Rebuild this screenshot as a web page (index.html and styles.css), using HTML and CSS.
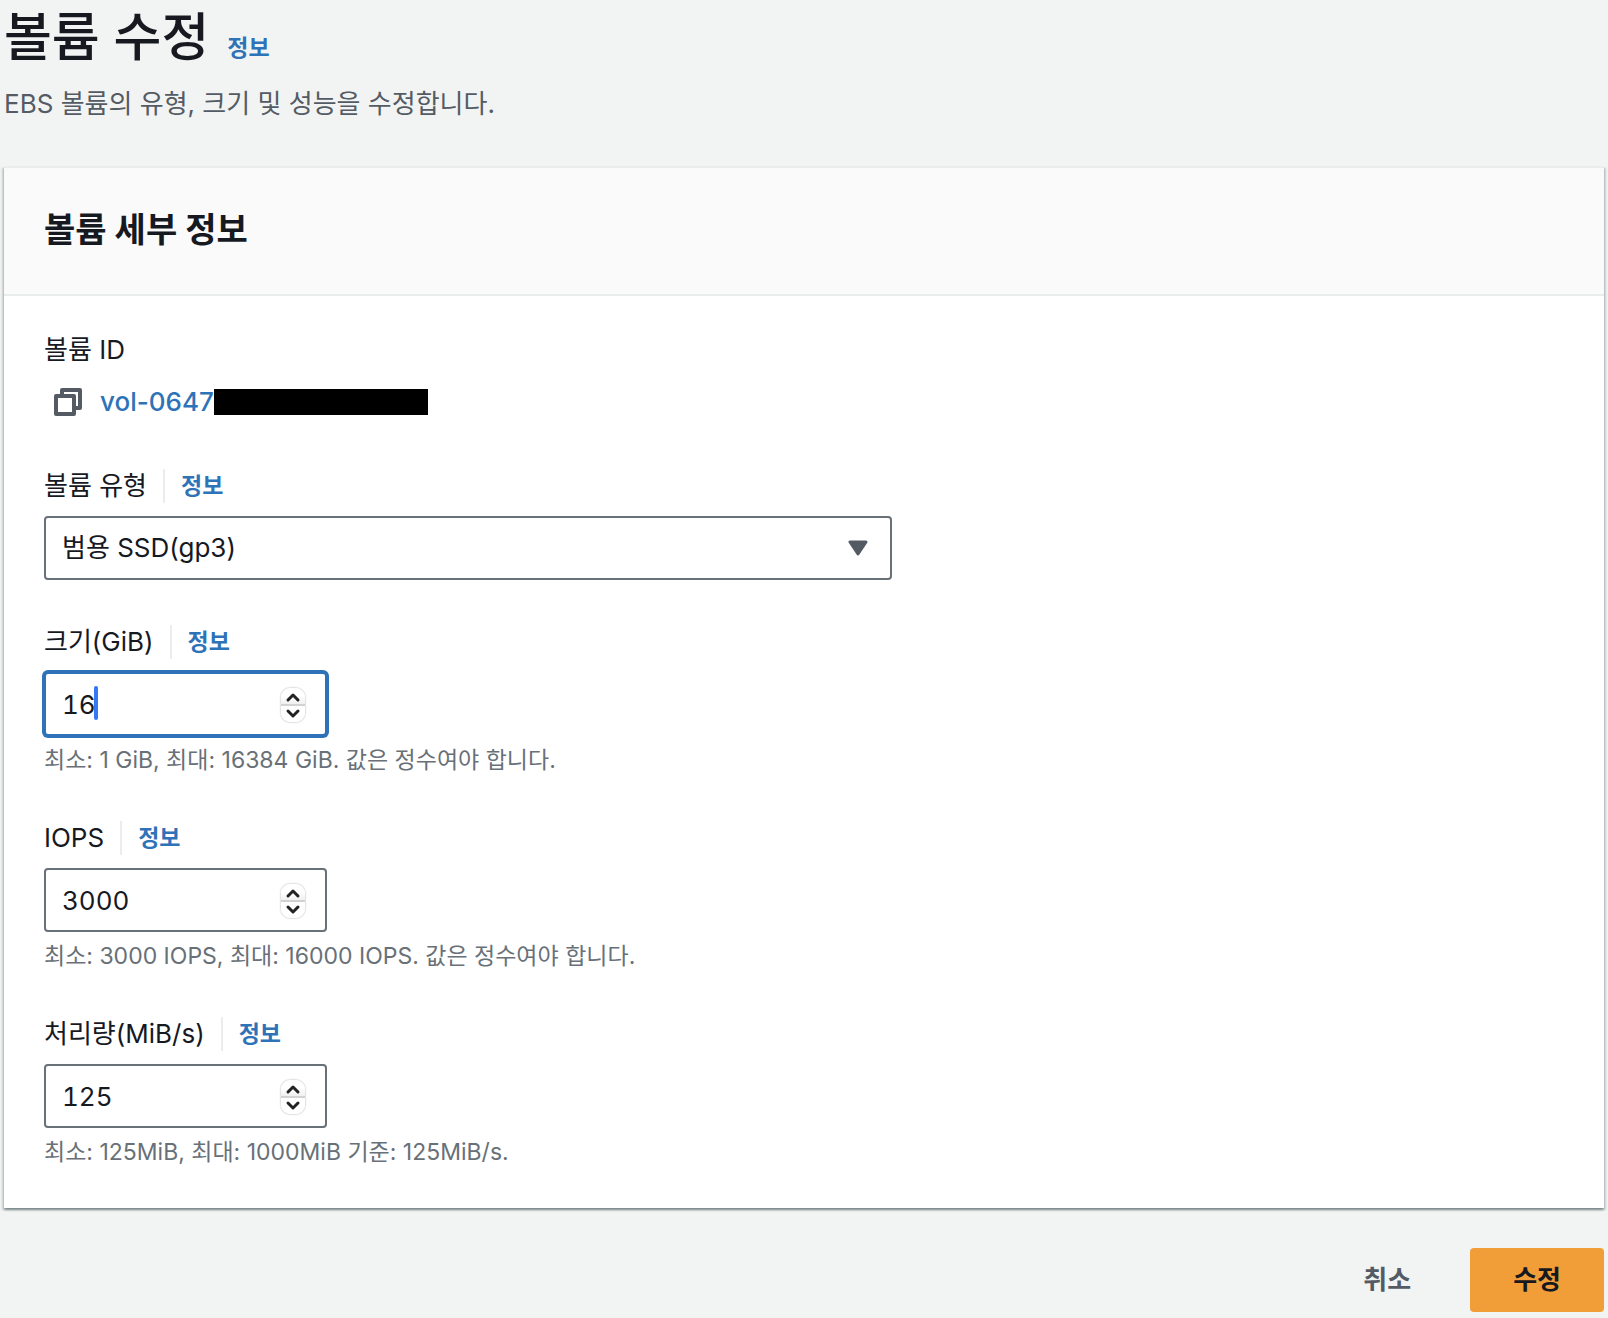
FILE: index.html
```html
<!DOCTYPE html>
<html lang="ko">
<head>
    <meta charset="UTF-8">
    <meta name="viewport" content="width=device-width, initial-scale=1.0">
    <title>볼륨 수정</title>
    <link rel="stylesheet" href="styles.css">
</head>
<body>

    <header class="page-header">
        <div class="title-row">
            <h1>볼륨 수정</h1>
            <a class="info" href="#">정보</a>
        </div>
        <p class="description">EBS 볼륨의 유형, 크기 및 성능을 수정합니다.</p>
    </header>

    <form>
        <section class="card">
            <div class="card-header">
                <h2>볼륨 세부 정보</h2>
            </div>

            <div class="card-body">
                <div class="field">
                    <div class="label-row">볼륨 ID</div>
                    <div class="volume-id">
                        <button class="copy-button" type="button" aria-label="복사">
                            <svg width="28" height="28" viewBox="0 0 28 28" fill="none" stroke="#545b64" stroke-width="4" stroke-linejoin="round">
                                <path d="M8 6V2H26V20H22"/>
                                <path d="M2 8H20V26H2Z"/>
                            </svg>
                        </button>
                        <a href="#">vol-0647</a>
                        <span class="redacted"></span>
                    </div>
                </div>

                <div class="field">
                    <div class="label-row">
                        <label for="volume-type">볼륨 유형</label>
                        <a class="info" href="#">정보</a>
                    </div>
                    <div class="select-box">
                        <select id="volume-type">
                            <option>범용 SSD(gp3)</option>
                        </select>
                        <svg class="arrow" width="20" height="16" viewBox="0 0 20 16">
                            <path d="M2 2H18L10 14Z" fill="#545b64" stroke="#545b64" stroke-width="3" stroke-linejoin="round"/>
                        </svg>
                    </div>
                </div>

                <div class="field">
                    <div class="label-row">
                        <label for="size">크기(GiB)</label>
                        <a class="info" href="#">정보</a>
                    </div>
                    <div class="number-box active">
                        <input type="number" id="size" value="16" min="1" max="16384">
                        <span class="caret"></span>
                        <span class="stepper">
                            <svg width="24" height="34" viewBox="0 0 24 34" fill="none" stroke="#222" stroke-width="3" stroke-linecap="round" stroke-linejoin="round">
                                <path d="M7 12L12 7L17 12"/>
                                <path d="M7 23L12 28L17 23"/>
                            </svg>
                        </span>
                    </div>
                    <p class="hint">최소: 1 GiB, 최대: 16384 GiB. 값은 정수여야 합니다.</p>
                </div>

                <div class="field">
                    <div class="label-row">
                        <label for="iops">IOPS</label>
                        <a class="info" href="#">정보</a>
                    </div>
                    <div class="number-box">
                        <input type="number" id="iops" value="3000" min="3000" max="16000">
                        <span class="stepper">
                            <svg width="24" height="34" viewBox="0 0 24 34" fill="none" stroke="#222" stroke-width="3" stroke-linecap="round" stroke-linejoin="round">
                                <path d="M7 12L12 7L17 12"/>
                                <path d="M7 23L12 28L17 23"/>
                            </svg>
                        </span>
                    </div>
                    <p class="hint">최소: 3000 IOPS, 최대: 16000 IOPS. 값은 정수여야 합니다.</p>
                </div>

                <div class="field">
                    <div class="label-row">
                        <label for="throughput">처리량(MiB/s)</label>
                        <a class="info" href="#">정보</a>
                    </div>
                    <div class="number-box">
                        <input type="number" id="throughput" value="125" min="125" max="1000">
                        <span class="stepper">
                            <svg width="24" height="34" viewBox="0 0 24 34" fill="none" stroke="#222" stroke-width="3" stroke-linecap="round" stroke-linejoin="round">
                                <path d="M7 12L12 7L17 12"/>
                                <path d="M7 23L12 28L17 23"/>
                            </svg>
                        </span>
                    </div>
                    <p class="hint">최소: 125MiB, 최대: 1000MiB 기준: 125MiB/s.</p>
                </div>
            </div>
        </section>

        <div class="actions">
            <button class="cancel" type="button">취소</button>
            <button class="submit" type="submit">수정</button>
        </div>
    </form>

</body>
</html>
```
FILE: styles.css
```css
* {
    box-sizing: border-box;
}
body {
    margin: 0;
    padding: 0 4px;
    background: #f2f4f3;
    color: #16191f;
    font-family: Inter, 'Noto Sans CJK KR', sans-serif;
    font-size: 26px;
    line-height: 34px;
}
h1, h2, p {
    margin: 0;
}
a {
    color: #2e73b8;
    text-decoration: none;
}
button, input, select {
    font: inherit;
    color: inherit;
}

/* Page header */
.page-header {
    padding: 2px 0 40px;
}
.title-row {
    display: flex;
    align-items: baseline;
    gap: 18px;
}
h1 {
    font-size: 52px;
    font-weight: 500;
    line-height: 72px;
}
.info {
    font-size: 23px;
    font-weight: 700;
}
.description {
    margin-top: 8px;
    line-height: 44px;
    color: #545b64;
}

/* Card */
.card {
    background: #fff;
    border-top: 2px solid #eaeded;
    box-shadow: 0 2px 2px rgba(0, 28, 36, 0.3), 2px 2px 2px rgba(0, 28, 36, 0.15), -2px 2px 2px rgba(0, 28, 36, 0.15);
}
.card-header {
    padding: 38px 40px 40px;
    background: #fafafa;
    border-bottom: 2px solid #eaeded;
}
h2 {
    font-size: 34px;
    font-weight: 700;
    line-height: 48px;
}
.card-body {
    display: flex;
    flex-direction: column;
    gap: 44px;
    padding: 36px 40px 40px;
}

/* Fields */
.label-row {
    display: flex;
    align-items: center;
    height: 34px;
    margin-bottom: 14px;
    padding-top: 2px;
}
.label-row .info {
    margin-left: 16px;
    padding-left: 16px;
    border-left: 2px solid #eaeded;
}
.volume-id {
    display: flex;
    align-items: center;
    height: 44px;
    padding-left: 10px;
}
.volume-id a {
    font-weight: 500;
}
.copy-button {
    display: flex;
    margin-right: 18px;
    padding: 0;
    background: none;
    border: none;
    cursor: pointer;
}
.redacted {
    width: 214px;
    height: 26px;
    background: #000;
}
.select-box {
    position: relative;
    max-width: 848px;
}
select, input {
    display: block;
    width: 100%;
    height: 64px;
    padding: 0 16px;
    background: #fff;
    border: 2px solid #687078;
    border-radius: 4px;
    appearance: none;
}
.arrow {
    position: absolute;
    top: 24px;
    right: 24px;
    pointer-events: none;
}
.number-box {
    position: relative;
    max-width: 283px;
}
input {
    font-variant-numeric: tabular-nums;
    appearance: textfield;
    outline: none;
}
input::-webkit-inner-spin-button {
    display: none;
}
.active input {
    border-color: #2e73b8;
    box-shadow: 0 0 0 2px #2e73b8;
}
.caret {
    position: absolute;
    top: 14px;
    left: 50px;
    width: 4px;
    height: 34px;
    background: #3478f6;
    border-radius: 2px;
}
.stepper {
    position: absolute;
    top: 16px;
    right: 22px;
    width: 24px;
    height: 34px;
    background: linear-gradient(#fff 8px, #f0f0f0 16px, #d2d2d2 16px, #d2d2d2 18px, #fff 18px);
    border-radius: 9px;
    box-shadow: 0 0 2px rgba(0, 0, 0, 0.4);
}
.stepper svg {
    display: block;
}
.hint {
    padding-top: 8px;
    font-size: 23px;
    line-height: 32px;
    color: #687078;
}

/* Actions */
.actions {
    display: flex;
    justify-content: flex-end;
    gap: 16px;
    padding: 40px 0 6px;
}
.actions button {
    height: 64px;
    padding: 0 43px;
    border: none;
    border-radius: 4px;
    font-weight: 700;
    cursor: pointer;
}
.cancel {
    background: none;
    color: #545b64;
}
.submit {
    background: #f19e39;
}
```
